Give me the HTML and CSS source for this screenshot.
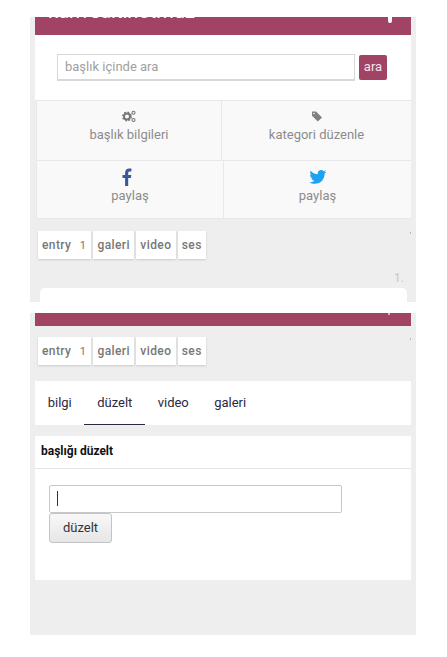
FILE: index.html
```html
<!DOCTYPE html>
<html lang="tr">
<head>
  <meta charset="UTF-8">
  <meta name="viewport" content="width=device-width, initial-scale=1.0">
  <title>başlığı düzelt</title>
  <link rel="stylesheet" href="styles.css">
</head>
<body>
<div class="shot shot-top">
  <div class="bar bar-top">
    <span class="bar-title">kahvealtinotmuz</span>
    <span class="bar-dot"></span>
  </div>
  <div class="search-card">
    <input class="search-input" type="text" placeholder="başlık içinde ara">
    <button class="search-btn">ara</button>
  </div>
  <div class="action-row action-row-a">
    <a class="action">
      <svg class="action-icon" width="14" height="13" viewBox="0 0 14 13" fill="none">
        <circle cx="5" cy="6.500" r="3" stroke="#777" stroke-width="2"/>
        <circle cx="5" cy="6.500" r="4.300" stroke="#777" stroke-width="1.400" stroke-dasharray="1.700 1.680"/>
        <circle cx="11.500" cy="2.800" r="1.500" stroke="#777" stroke-width="1.100"/>
        <circle cx="11.500" cy="10" r="1.500" stroke="#777" stroke-width="1.100"/>
      </svg>
      <span>başlık bilgileri</span>
    </a>
    <a class="action">
      <svg class="action-icon" width="12" height="13" viewBox="0 0 12 13">
        <path d="M1 1.500 L5 1.500 L11 7.400 L6.800 11.600 L1 5.700 Z" fill="#808080"/>
        <circle cx="3" cy="3.500" r="0.800" fill="#f9f9f9"/>
      </svg>
      <span>kategori düzenle</span>
    </a>
  </div>
  <div class="action-row action-row-b">
    <a class="action">
      <svg class="share-icon" width="18" height="18" viewBox="3 0 18 18">
        <path d="M10.2 18 V10 H12.9 L13.3 7 H10.2 V5 C10.2 4.100 10.600 3.500 11.800 3.500 H13.400 V0.600 C12.900 0.500 12.100 0.400 11.200 0.400 C8.800 0.400 7.100 1.900 7.100 4.600 V7 H4.500 V10 H7.100 V18 Z" fill="#3b5998"/>
      </svg>
      <span>paylaş</span>
    </a>
    <a class="action">
      <svg class="share-icon" width="18" height="18" viewBox="0 0 24 24">
        <path d="M23 4.900c-.8.4-1.700.6-2.600.7.9-.6 1.600-1.400 2-2.500-.9.5-1.900.9-2.900 1.100C18.700 3.300 17.500 2.800 16.200 2.800c-2.500 0-4.600 2.100-4.600 4.600 0 .4 0 .7.100 1C7.900 8.200 4.500 6.400 2.200 3.600c-.4.700-.6 1.500-.6 2.300 0 1.600.8 3 2 3.800-.8 0-1.500-.2-2.100-.6v.1c0 2.200 1.600 4.100 3.700 4.500-.4.100-.8.200-1.200.2-.3 0-.6 0-.9-.1.600 1.800 2.300 3.200 4.300 3.200-1.600 1.200-3.600 2-5.700 2-.4 0-.7 0-1.100-.1 2 1.300 4.500 2.100 7.100 2.100 8.500 0 13.100-7 13.100-13.100v-.6c.900-.6 1.700-1.400 2.300-2.400z" fill="#1da1f2"/>
      </svg>
      <span>paylaş</span>
    </a>
  </div>
  <div class="pill-row">
    <a class="pill pill-entry">entry <small>1</small></a>
    <a class="pill">galeri</a>
    <a class="pill">video</a>
    <a class="pill">ses</a>
    <span class="tick"></span>
  </div>
  <div class="entry-no">1.</div>
  <div class="entry-card"></div>
</div>

<div class="shot shot-bottom">
  <div class="bar bar-bottom"><span class="bar-mark"></span></div>
  <div class="pill-row">
    <a class="pill pill-entry">entry <small>1</small></a>
    <a class="pill">galeri</a>
    <a class="pill">video</a>
    <a class="pill">ses</a>
    <span class="tick"></span>
  </div>
  <div class="tabs">
    <a class="tab">bilgi</a>
    <a class="tab active">düzelt</a>
    <a class="tab">video</a>
    <a class="tab">galeri</a>
  </div>
  <div class="edit-card">
    <div class="edit-head">başlığı düzelt</div>
    <div class="edit-body">
      <div class="edit-input"><span class="caret"></span></div>
      <button class="edit-btn">düzelt</button>
    </div>
  </div>
</div>
</body>
</html>
```

FILE: styles.css
```css
body {
    margin: 0;
    padding: 17px 31px 0 30px;
    background: #fff;
    font-family: Roboto, Arial, sans-serif;
}

.shot {
    background: #eee;
    overflow: hidden;
}

.shot-top {
    height: 285px;
}

.shot-bottom {
    height: 322px;
    margin-top: 11px;
}

.bar {
    background: #a04365;
    margin: 0 5px;
}

.bar-top {
    height: 18px;
    display: flex;
    justify-content: space-between;
    align-items: flex-start;
    padding: 0 19px 0 13px;
    overflow: hidden;
}

.bar-title {
    color: #fff;
    font-size: 20px;
    line-height: 24px;
    margin-top: -18px;
    white-space: nowrap;
}

.bar-dot {
    width: 4px;
    height: 6px;
    background: #fff;
    border-radius: 0 0 2px 2px;
}

.bar-bottom {
    height: 13px;
    display: flex;
    justify-content: flex-end;
    padding-right: 21px;
}

.bar-mark {
    width: 2px;
    height: 2px;
    background: #d9b3c3;
}

.search-card {
    background: #fff;
    margin: 0 5px;
    height: 65px;
    display: flex;
    align-items: center;
    padding: 0 24px 0 22px;
    gap: 4px;
    box-sizing: border-box;
}

.search-input {
    width: 298px;
    height: 27px;
    box-sizing: border-box;
    border: 1px solid #d8d8d8;
    border-bottom-width: 2px;
    padding: 0 7px 1px;
    font-family: inherit;
    font-size: 13px;
    outline: none;
}

.search-input::placeholder {
    color: #a0a0a0;
    opacity: 1;
}

.search-btn {
    width: 28px;
    height: 25px;
    padding: 0 0 2px;
    border: none;
    border-radius: 2px;
    background: #a04365;
    color: #f3e3ea;
    font-family: inherit;
    font-size: 13px;
}

.action-row {
    display: grid;
    margin: 0 5px 0 6px;
    background: #f9f9f9;
}

.action-row-a {
    grid-template-columns: 185px 190px;
    height: 60px;
}

.action-row-b {
    grid-template-columns: 187px 188px;
    height: 59px;
}

.action {
    display: flex;
    flex-direction: column;
    align-items: center;
    box-sizing: border-box;
    border-top: 1px solid #e8e8e8;
    border-left: 1px solid #e8e8e8;
    color: #8c8c8c;
    font-size: 13px;
}

.action-row-b .action {
    border-bottom: 1px solid #e8e8e8;
}

.action-icon {
    margin-top: 9px;
    margin-bottom: 4px;
}

.share-icon {
    margin-top: 7px;
    margin-bottom: 2px;
}

.pill-row {
    position: relative;
    display: flex;
    gap: 2px;
    margin: 12px 0 0 8px;
}

.pill {
    height: 28px;
    line-height: 28px;
    padding: 0 4.200px;
    background: #fff;
    color: #777;
    font-size: 12px;
    font-weight: 500;
    letter-spacing: 0.4px;
    box-shadow: 0 1px 2px rgba(0, 0, 0, 0.15);
    white-space: nowrap;
}

.pill-entry {
    padding: 0 5px 0 4px;
}

.pill small {
    font-size: 11px;
    font-weight: 400;
    margin-left: 5px;
}

.tick {
    position: absolute;
    right: 5px;
    top: 1px;
    width: 1px;
    height: 2px;
    background: #bbb;
}

.entry-no {
    text-align: right;
    margin: 9px 12px 0 0;
    height: 20px;
    line-height: 20px;
    color: #c8c8c8;
    font-size: 12px;
}

.entry-card {
    background: #fff;
    margin: 0 9px 0 10px;
    height: 30px;
    border-radius: 5px;
}

.shot-bottom .pill-row {
    margin-top: 11px;
}

.tabs {
    display: flex;
    height: 44px;
    margin: 16px 5px 0;
    background: #fff;
}

.tab {
    padding: 0 12.700px;
    line-height: 44px;
    color: #2c2745;
    font-size: 13px;
    box-sizing: border-box;
    height: 44px;
}

.tab.active {
    border-bottom: 1px solid #2c2745;
}

.edit-card {
    background: #fff;
    margin: 11px 5px 0;
    height: 144px;
}

.edit-head {
    height: 33px;
    line-height: 31px;
    box-sizing: border-box;
    padding-left: 6px;
    border-bottom: 1px solid #e4e4e4;
    color: #111;
    font-size: 12px;
    font-weight: 700;
}

.edit-body {
    padding: 16px 0 0 14px;
}

.edit-input {
    width: 293px;
    height: 28px;
    box-sizing: border-box;
    border: 1px solid #c8c8c8;
    border-radius: 2px;
    padding: 5px 7px;
}

.caret {
    display: block;
    width: 1px;
    height: 15px;
    background: #333;
}

.edit-btn {
    display: block;
    width: 63px;
    height: 30px;
    padding: 0 0 1px;
    border: 1px solid #c4c4c4;
    border-radius: 3px;
    background: linear-gradient(#f8f8f8, #e6e6e6);
    color: #333;
    font-family: inherit;
    font-size: 13px;
}
```
